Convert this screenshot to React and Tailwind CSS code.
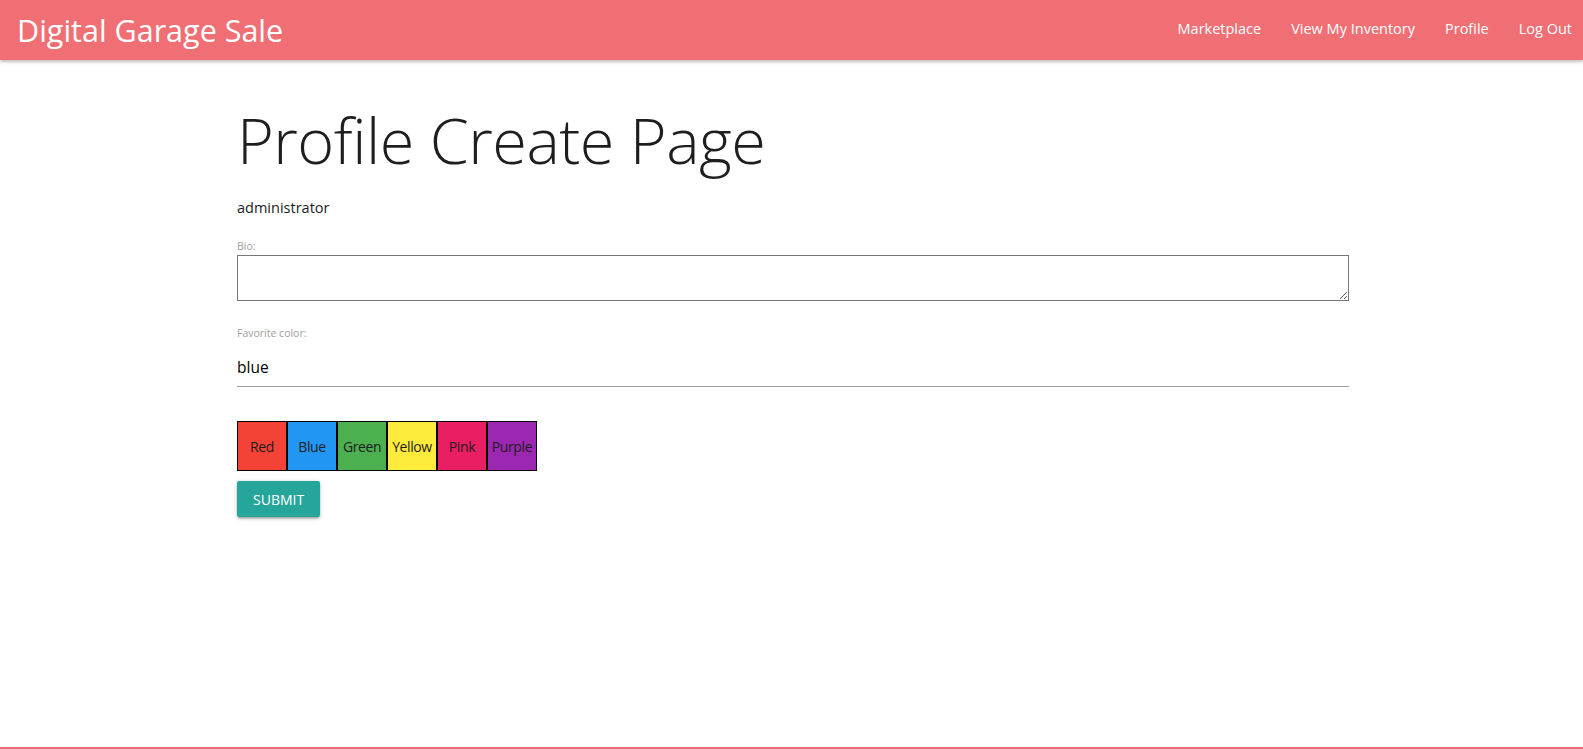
import React, { useState } from 'react';

const COLORS = [
  { label: 'Red', bg: 'bg-[#f44336]' },
  { label: 'Blue', bg: 'bg-[#2196f3]' },
  { label: 'Green', bg: 'bg-[#4caf50]' },
  { label: 'Yellow', bg: 'bg-[#ffeb3b]' },
  { label: 'Pink', bg: 'bg-[#e91e63]' },
  { label: 'Purple', bg: 'bg-[#9c27b0]' },
];

const NAV_LINKS = ['Marketplace', 'View My Inventory', 'Profile', 'Log Out'];

function Navbar() {
  return (
    <nav className="h-[60px] bg-[#ef6f74] text-white flex items-center justify-between shadow-[0_2px_3px_rgba(0,0,0,0.25)]">
      <a href="#" className="pl-[17px] text-[30.5px] leading-none">
        Digital Garage Sale
      </a>
      <ul className="flex items-center pb-[4px]">
        {NAV_LINKS.map((link) => (
          <li key={link} className="px-[15px] last:pr-[11px]">
            <a href="#" className="text-[14.5px]">
              {link}
            </a>
          </li>
        ))}
      </ul>
    </nav>
  );
}

export default function App() {
  const [bio, setBio] = useState('');
  const [color, setColor] = useState('blue');

  return (
    <div
      className="min-h-[749px] flex flex-col bg-white text-[#222]"
      style={{ fontFamily: '"Open Sans", "Liberation Sans", sans-serif' }}
    >
      <Navbar />
      <main className="flex-1 w-[1112px] ml-[237px]">
        <h1 className="mt-[43px] text-[63px] leading-[74px] font-light tracking-[-0.5px] text-[#1e1e1e]">
          Profile Create Page
        </h1>
        <p className="mt-[20px] text-[14.5px] text-[#222]">administrator</p>

        <label htmlFor="bio" className="block mt-[20px] text-[10.5px] text-[#9e9e9e]">
          Bio:
        </label>
        <textarea
          id="bio"
          value={bio}
          onChange={(e) => setBio(e.target.value)}
          className="block w-full h-[46px] border border-[#767676] outline-none"
        />

        <label htmlFor="color" className="block mt-[25px] text-[10.5px] text-[#9e9e9e]">
          Favorite color:
        </label>
        <input
          id="color"
          value={color}
          onChange={(e) => setColor(e.target.value)}
          className="block mt-[6px] w-full h-[40px] text-[15.5px] text-black border-b border-[#9e9e9e] outline-none"
        />

        <div className="flex mt-[34px]">
          {COLORS.map((c) => (
            <button
              key={c.label}
              type="button"
              onClick={() => setColor(c.label.toLowerCase())}
              className={`w-[50px] h-[50px] border border-black flex items-center justify-center text-[14px] tracking-[-0.4px] text-[#1d1d1d] ${c.bg}`}
            >
              {c.label}
            </button>
          ))}
        </div>

        <button
          type="submit"
          className="mt-[10px] h-[36px] px-[16px] rounded-[2px] bg-[#26a69a] text-white text-[14px] uppercase shadow-[0_2px_2px_rgba(0,0,0,0.14),0_3px_1px_-2px_rgba(0,0,0,0.12),0_1px_5px_rgba(0,0,0,0.2)]"
        >
          Submit
        </button>
      </main>
      <div className="h-[2px] bg-[#ef6f74]" />
    </div>
  );
}
